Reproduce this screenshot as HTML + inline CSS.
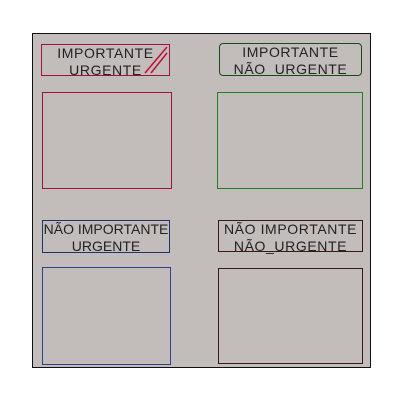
<!DOCTYPE html>
<html><head><style>
body{margin:0;width:400px;height:400px;background:#fff;position:relative;overflow:hidden;font-family:"Liberation Sans",sans-serif}
.f{position:absolute;left:32px;top:33px;width:337px;height:333px;background:#c2bcbb;border:1px solid #111}
.b{position:absolute;box-sizing:border-box;border:1.5px solid}
.l{text-align:center;font-size:14px;line-height:17px;color:#222;letter-spacing:0.6px;white-space:nowrap;overflow:visible}
</style></head><body>
<div class="f"></div>
<div class="b l" style="left:41px;top:44px;width:129px;height:32px;border-color:#a01040">IMPORTANTE<br>URGENTE
<svg style="position:absolute;right:0;top:0" width="30" height="30"><path d="M28 2 L6 28 M28 8 L12 28" stroke="#c0103a" stroke-width="1.5" fill="none"/></svg></div>
<div class="b" style="left:42px;top:92px;width:130px;height:97px;border-color:#a01040"></div>
<div class="b l" style="left:219px;top:43px;width:143px;height:33px;border-color:#1a4a1a;border-radius:4px">IMPORTANTE<br>NÃO&nbsp; URGENTE</div>
<div class="b" style="left:217px;top:92px;width:146px;height:97px;border-color:#208020"></div>
<div class="b l" style="left:42px;top:220px;width:128px;height:33px;border-color:#203070;letter-spacing:0">NÃO IMPORTANTE<br>URGENTE</div>
<div class="b" style="left:42px;top:267px;width:129px;height:98px;border-color:#304090"></div>
<div class="b l" style="left:218px;top:220px;width:145px;height:32px;border-color:#3a1a10">NÃO IMPORTANTE<br>NÃO_URGENTE</div>
<div class="b" style="left:218px;top:268px;width:145px;height:96px;border-color:#3a1a10"></div>
</body></html>
